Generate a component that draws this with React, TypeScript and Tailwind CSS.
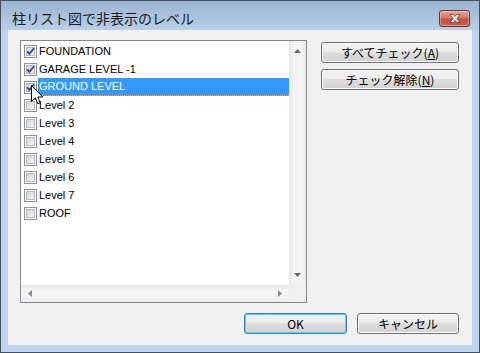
import React from "react";

const FONT_JP = { fontFamily: '"Noto Sans CJK JP", "Liberation Sans", sans-serif' };
const FONT_LIST = { fontFamily: '"Liberation Sans", Arial, sans-serif' };

function CheckBox({ checked }: { checked?: boolean }) {
  return (
    <svg width="13" height="13" viewBox="0 0 13 13" className="shrink-0">
      <defs>
        <linearGradient id="cbg" x1="0" y1="0" x2="1" y2="1">
          <stop offset="0" stopColor="#cfd2d6" />
          <stop offset="1" stopColor="#f7f7f7" />
        </linearGradient>
      </defs>
      <rect x="0.5" y="0.5" width="12" height="12" fill="#ffffff" stroke="#8f8f8f" />
      <rect x="2.5" y="2.5" width="8" height="8" fill="url(#cbg)" stroke="#b4b8bd" />
      {checked && (
        <path d="M3.2 6.3 L5.4 8.8 L10 3.2" fill="none" stroke="#2e4595" strokeWidth="1.8" />
      )}
    </svg>
  );
}

const items = [
  { label: "FOUNDATION", checked: true },
  { label: "GARAGE LEVEL -1", checked: true },
  { label: "GROUND LEVEL", checked: true, selected: true },
  { label: "Level 2" },
  { label: "Level 3" },
  { label: "Level 4" },
  { label: "Level 5" },
  { label: "Level 6" },
  { label: "Level 7" },
  { label: "ROOF" },
];

function WinButton({ children, def, w }: { children: React.ReactNode; def?: boolean; w: string }) {
  return (
    <div
      className={`${w} h-[21px] rounded-[3px] border flex items-center justify-center text-[12px] text-black ${
        def
          ? "border-[#3c7fb1] shadow-[inset_0_0_0_1px_#48d5fb]"
          : "border-[#707070] shadow-[inset_0_0_0_1px_#fbfbfb]"
      } bg-[linear-gradient(to_bottom,#f3f3f3_0%,#ebebeb_50%,#dddddd_50%,#d2d2d2_100%)]`}
      style={FONT_JP}
    >
      {children}
    </div>
  );
}

export default function App() {
  return (
    <div className="w-[480px] h-[353px] relative overflow-hidden border border-[#45505c] bg-[#bed4ec] flex flex-col">
      {/* title bar */}
      <div className="h-[29px] shrink-0 flex items-start justify-between bg-[linear-gradient(to_bottom,#9bb4d1,#b8cfe8)]">
        <div className="pl-[11px] pt-[9px] text-[14px] leading-[16px] text-[#1a1a1a]" style={FONT_JP}>
          柱リスト図で非表示のレベル
        </div>
        <div className="mt-[9px] mr-[9px] w-[31px] h-[17px] rounded-[3px] border border-[#7a2d24] bg-[linear-gradient(to_bottom,#e3a598_0%,#d47a68_45%,#c4503c_55%,#c9624f_100%)] shadow-[inset_0_0_0_1px_rgba(255,255,255,0.35)] flex items-center justify-center">
          <svg width="14" height="11" viewBox="0 0 14 11">
            <path
              d="M2 1.5 L5.2 1.5 L7 3.6 L8.8 1.5 L12 1.5 L8.7 5.5 L12 9.5 L8.8 9.5 L7 7.4 L5.2 9.5 L2 9.5 L5.3 5.5 Z"
              fill="#ffffff"
              stroke="#5a3a36"
              strokeWidth="0.8"
            />
          </svg>
        </div>
      </div>

      {/* client area */}
      <div className="mx-[7px] h-[315px] shrink-0 bg-[#f0f0f0] pl-[12px] pr-[13px] pt-[10px] flex flex-col">
        <div className="flex">
          {/* list box */}
          <div className="w-[287px] h-[263px] border border-[#828790] bg-white grid grid-cols-[268px_17px] grid-rows-[244px_17px]">
            <div className="pt-[1px] overflow-hidden" style={FONT_LIST}>
              {items.map((it) => (
                <div key={it.label} className="h-[18px] flex items-center">
                  <div className="ml-[3px]">
                    <CheckBox checked={it.checked} />
                  </div>
                  <div
                    className={`ml-[1px] flex-1 h-[18px] flex items-center pl-[1px] text-[11px] ${
                      it.selected
                        ? "bg-[#3399ff] text-white border-b border-dotted border-[#f5a25a]"
                        : "text-black"
                    }`}
                  >
                    {it.label}
                  </div>
                </div>
              ))}
            </div>
            {/* vertical scrollbar */}
            <div className="bg-[linear-gradient(to_right,#e6e6e6,#f4f4f4_30%,#f4f4f4_70%,#ebebeb)] flex flex-col items-center justify-between py-[8px]">
              <svg width="7" height="4" viewBox="0 0 7 4">
                <path d="M0 4 L3.5 0 L7 4 Z" fill="#6a6a6a" />
              </svg>
              <svg width="7" height="4" viewBox="0 0 7 4">
                <path d="M0 0 L3.5 4 L7 0 Z" fill="#6a6a6a" />
              </svg>
            </div>
            {/* horizontal scrollbar */}
            <div className="bg-[linear-gradient(to_bottom,#e6e6e6,#f4f4f4_30%,#f4f4f4_70%,#ebebeb)] flex items-center justify-between px-[7px]">
              <svg width="4" height="7" viewBox="0 0 4 7">
                <path d="M4 0 L0 3.5 L4 7 Z" fill="#8a8a8a" />
              </svg>
              <svg width="4" height="7" viewBox="0 0 4 7">
                <path d="M0 0 L4 3.5 L0 7 Z" fill="#8a8a8a" />
              </svg>
            </div>
            <div className="bg-[#f0f0f0]" />
          </div>

          {/* side buttons */}
          <div className="ml-[14px] pt-[2px] flex flex-col gap-[6px]">
            <WinButton w="w-[138px]">
              <span>
                すべてチェック(<span className="underline">A</span>)
              </span>
            </WinButton>
            <WinButton w="w-[138px]">
              <span>
                チェック解除(<span className="underline">N</span>)
              </span>
            </WinButton>
          </div>
        </div>

        <div className="mt-[10px] flex justify-end gap-[10px]">
          <WinButton w="w-[103px]" def>
            OK
          </WinButton>
          <WinButton w="w-[102px]">キャンセル</WinButton>
        </div>
      </div>

      {/* mouse cursor */}
      <svg
        className="absolute left-[30px] top-[84px]"
        width="13"
        height="21"
        viewBox="0 0 13 21"
      >
        <path
          d="M0.5 0.5 L0.5 16.5 L4.3 12.8 L6.8 18.8 L9.2 17.8 L6.8 12 L11.8 12 Z"
          fill="#ffffff"
          stroke="#000000"
          strokeWidth="1"
          strokeLinejoin="miter"
        />
      </svg>
    </div>
  );
}
